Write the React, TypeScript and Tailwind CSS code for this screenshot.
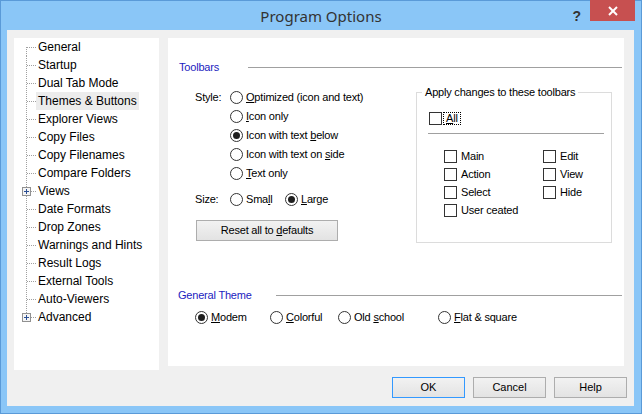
import React from "react";

const treeItems = [
  { label: "General" },
  { label: "Startup" },
  { label: "Dual Tab Mode" },
  { label: "Themes & Buttons" },
  { label: "Explorer Views" },
  { label: "Copy Files" },
  { label: "Copy Filenames" },
  { label: "Compare Folders" },
  { label: "Views", plus: true },
  { label: "Date Formats" },
  { label: "Drop Zones" },
  { label: "Warnings and Hints" },
  { label: "Result Logs" },
  { label: "External Tools" },
  { label: "Auto-Viewers" },
  { label: "Advanced", plus: true },
];

function TreeGlyph({ first, last, plus }: { first: boolean; last: boolean; plus?: boolean }) {
  return (
    <svg width="22" height="18" className="shrink-0">
      <line x1="12.5" y1={first ? 9 : 0} x2="12.5" y2={last ? 9 : 18} stroke="#a0a0a0" strokeDasharray="1 1" />
      <line x1={plus ? 17 : 13} y1="9.5" x2="22" y2="9.5" stroke="#a0a0a0" strokeDasharray="1 1" />
      {plus && (
        <g>
          <rect x="8.5" y="5.5" width="8" height="8" fill="#f4f4f4" stroke="#919191" />
          <line x1="10" y1="9.5" x2="15" y2="9.5" stroke="#2b4f93" />
          <line x1="12.5" y1="7" x2="12.5" y2="12" stroke="#2b4f93" />
        </g>
      )}
    </svg>
  );
}

function Radio({ checked }: { checked?: boolean }) {
  return (
    <span className="w-[13px] h-[13px] rounded-full border border-[#333333] bg-white flex items-center justify-center shrink-0">
      {checked && <span className="w-[7px] h-[7px] rounded-full bg-[#1f1f1f]" />}
    </span>
  );
}

function Check() {
  return <span className="w-[13px] h-[13px] border border-[#333333] bg-white shrink-0" />;
}

function Tree() {
  return (
    <div className="ml-[7px] w-[145px] h-[332px] bg-white flex flex-col text-[12px] text-black">
      {treeItems.map((it, i) => (
        <div key={it.label} className="flex items-center h-[18px]">
          <TreeGlyph first={i === 0} last={i === treeItems.length - 1} plus={it.plus} />
          <span className={`px-[2px] leading-[18px] whitespace-nowrap ${i === 3 ? "bg-[#ececec]" : ""}`}>
            {it.label}
          </span>
        </div>
      ))}
    </div>
  );
}

function StyleRow({ label, checked, children }: { label?: string; checked?: boolean; children: React.ReactNode }) {
  return (
    <div className="flex items-center h-[19px]">
      <span className="w-[35px]">{label}</span>
      <Radio checked={checked} />
      <span className="ml-[3px] whitespace-nowrap">{children}</span>
    </div>
  );
}

function CheckItem({ label }: { label: string }) {
  return (
    <div className="flex items-center">
      <Check />
      <span className="ml-[4px] whitespace-nowrap">{label}</span>
    </div>
  );
}

function Content() {
  return (
    <div className="ml-[9px] w-[456px] h-[328px] bg-white flex flex-col text-[11px] tracking-[-0.2px] text-black">
      <div className="flex items-center h-[16px] mt-[21px] pl-[11px] pr-[2px]">
        <span className="w-[69px] shrink-0 text-[#1c1cc0]">Toolbars</span>
        <div className="flex-1 h-px bg-[#a0a0a0]" />
      </div>

      <div className="flex items-start">
        <div className="ml-[27px] mt-[13px] flex flex-col">
          <StyleRow label="Style:">
            <u>O</u>ptimized (icon and text)
          </StyleRow>
          <StyleRow>
            <u>I</u>con only
          </StyleRow>
          <StyleRow checked>
            Icon with text <u>b</u>elow
          </StyleRow>
          <StyleRow>
            Icon with text on <u>s</u>ide
          </StyleRow>
          <StyleRow>
            <u>T</u>ext only
          </StyleRow>

          <div className="flex items-center h-[19px] mt-[7px]">
            <span className="w-[35px]">Size:</span>
            <div className="w-[55px] flex items-center">
              <Radio />
              <span className="ml-[3px]">
                Sma<u>l</u>l
              </span>
            </div>
            <Radio checked />
            <span className="ml-[3px]">
              <u>L</u>arge
            </span>
          </div>

          <button className="mt-[11px] ml-[1px] w-[142px] h-[21px] border border-[#adadad] bg-linear-to-b from-[#f2f2f2] to-[#e3e3e3] flex items-center justify-center">
            <span>
              Reset all to <u>d</u>efaults
            </span>
          </button>
        </div>

        <fieldset className="ml-auto mr-[12px] mt-[10px] w-[196px] h-[158px] border border-[#dcdcdc]">
          <legend className="ml-[5px] px-[3px] leading-[14px]">Apply changes to these toolbars</legend>
          <div className="flex items-center h-[16px] mt-[11px] pl-[12px]">
            <Check />
            <span className="ml-[1px] px-[2px] leading-[11px] border border-dotted border-black">
              <u>A</u>ll
            </span>
          </div>
          <div className="mt-[7px] ml-[11px] w-[176px] h-px bg-[#a0a0a0]" />
          <div className="mt-[13px] pl-[27px] grid grid-cols-[99px_auto] auto-rows-[18px] items-center">
            <CheckItem label="Main" />
            <CheckItem label="Edit" />
            <CheckItem label="Action" />
            <CheckItem label="View" />
            <CheckItem label="Select" />
            <CheckItem label="Hide" />
            <CheckItem label="User ceated" />
          </div>
        </fieldset>
      </div>

      <div className="flex items-center h-[16px] mt-[44px] pl-[10px] pr-[2px]">
        <span className="w-[98px] shrink-0 text-[#1c1cc0]">General Theme</span>
        <div className="flex-1 h-px bg-[#a0a0a0]" />
      </div>

      <div className="flex items-center h-[19px] mt-[5px] pl-[27px]">
        <div className="w-[75px] flex items-center">
          <Radio checked />
          <span className="ml-[3px]">
            <u>M</u>odem
          </span>
        </div>
        <div className="w-[68px] flex items-center">
          <Radio />
          <span className="ml-[3px]">
            <u>C</u>olorful
          </span>
        </div>
        <div className="w-[100px] flex items-center">
          <Radio />
          <span className="ml-[3px]">
            Old <u>s</u>chool
          </span>
        </div>
        <div className="flex items-center">
          <Radio />
          <span className="ml-[3px]">
            <u>F</u>lat &amp; square
          </span>
        </div>
      </div>
    </div>
  );
}

function DialogButton({ label, primary }: { label: string; primary?: boolean }) {
  return (
    <button
      className={`w-[73px] h-[21px] border bg-linear-to-b from-[#f2f2f2] to-[#e3e3e3] text-[11px] text-black ${
        primary ? "border-[#3399ff]" : "border-[#adadad]"
      }`}
    >
      {label}
    </button>
  );
}

export default function App() {
  return (
    <div className="w-[642px] h-[414px] bg-[#8ac6f7] border border-[#5a9ad8] flex flex-col font-['Liberation_Sans',Arial,sans-serif] select-none">
      <div className="h-[29px] grid grid-cols-[1fr_auto_1fr] shrink-0">
        <div />
        <div className="flex items-center pt-[1px] font-['Noto_Sans',sans-serif] text-[15px] text-[#333333]">
          Program Options
        </div>
        <div className="flex justify-end items-start">
          <span className="mt-[8px] mr-[9px] text-[14px] leading-none font-bold text-[#333333]">?</span>
          <div className="-mt-[1px] mr-[6px] w-[45px] h-[21px] bg-[#c75050] flex items-center justify-center">
            <svg width="10" height="10" viewBox="0 0 10 10">
              <line x1="1" y1="1" x2="9" y2="9" stroke="white" strokeWidth="2" />
              <line x1="9" y1="1" x2="1" y2="9" stroke="white" strokeWidth="2" />
            </svg>
          </div>
        </div>
      </div>

      <div className="ml-[6px] w-[627px] h-[376px] bg-[#f0f0f0] flex flex-col shrink-0">
        <div className="flex items-start pt-[8px]">
          <Tree />
          <Content />
        </div>
        <div className="flex justify-end gap-[8px] mt-[7px] pr-[7px]">
          <DialogButton label="OK" primary />
          <DialogButton label="Cancel" />
          <DialogButton label="Help" />
        </div>
      </div>
    </div>
  );
}
